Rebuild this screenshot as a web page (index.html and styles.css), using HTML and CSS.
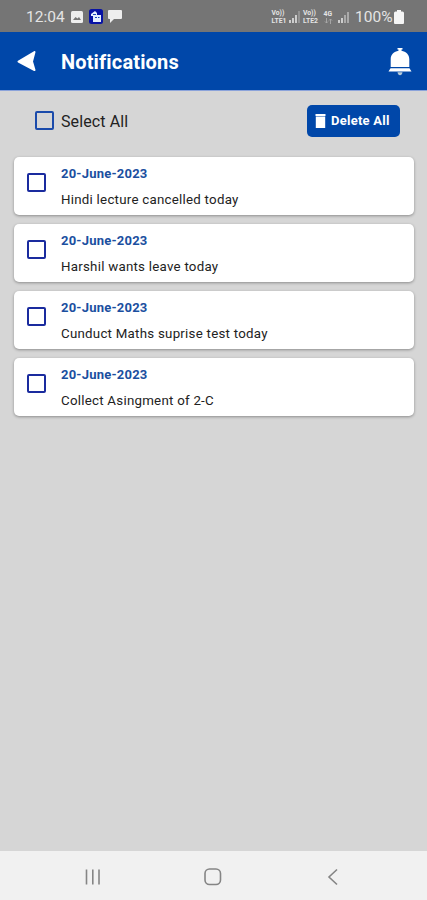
FILE: index.html
```html
<!DOCTYPE html>
<html lang="en">

<head>
  <meta charset="UTF-8">
  <meta name="viewport" content="width=device-width, initial-scale=1.0">
  <title>Notifications</title>
  <link rel="stylesheet" href="styles.css">
</head>

<body>
  <div class="status">
    <span class="time">12:04</span>
    <svg class="s-img" width="12" height="12" viewBox="0 0 12 12">
      <rect width="12" height="12" rx="1.5" fill="#eee" />
      <path d="M2 9l2.500-3 2 1.500 1.500-1.500L10 9z" fill="#777" />
    </svg>
    <svg class="s-app" width="14" height="15" viewBox="0 0 14 15">
      <rect width="14" height="15" rx="2.500" fill="#0712a5" />
      <path d="M2 5l4-3 2 2v2h4v7H4V7H2z" fill="#e6efff" />
      <path d="M4 5.500h3M6 8.500h2M9 8.500h1.500" stroke="#1746b8" />
    </svg>
    <svg class="s-chat" width="14" height="13" viewBox="0 0 14 13">
      <path d="M1 0h12q1 0 1 1v7q0 1-1 1H6l-4 4V9H1Q0 9 0 8V1q0-1 1-1z" fill="#eee" />
    </svg>
    <div class="right">
      <span class="lte">Vo))<br>LTE1</span>
      <svg class="signal" width="12" height="13" viewBox="0 0 12 13">
        <path d="M1 10v3M4 8v5M7 5v8" stroke="#ddd" stroke-width="1.700" />
        <path d="M10 1v12" stroke="#999" stroke-width="1.700" />
      </svg>
      <span class="lte">Vo))<br>LTE2</span>
      <div class="net">
        <span>4G</span>
        <svg width="9" height="6" viewBox="0 0 9 6">
          <path d="M2.500 0v5M1 3.500l1.500 1.500L4 3.500M6.500 6V1M5 2.500L6.500 1 8 2.500" fill="none" stroke="#aaa" stroke-width=".9" />
        </svg>
      </div>
      <svg class="signal last" width="12" height="13" viewBox="0 0 12 13">
        <path d="M1 10v3M4 8v5" stroke="#ddd" stroke-width="1.700" />
        <path d="M7 5v8M10 2v11" stroke="#aaa" stroke-width="2" />
      </svg>
      <span class="percent">100%</span>
      <svg width="10" height="14" viewBox="0 0 10 14">
        <path d="M3 0h4v1.500h1.500q1.500 0 1.500 1.500V13q0 1-1 1H1q-1 0-1-1V3q0-1.500 1.500-1.500H3z" fill="#f5f5f5" />
      </svg>
    </div>
  </div>

  <div class="header">
    <svg class="back" width="19" height="22" viewBox="0 0 19 22">
      <path d="M17.500 2L1.500 11.500l16 8.500-2.500-8.500z" fill="#fff" stroke="#fff" stroke-width="2" stroke-linejoin="round" />
    </svg>
    <h1>Notifications</h1>
    <svg class="bell" width="24" height="29" viewBox="0 0 24 29">
      <path d="M9.500 1h5v1.500h-1v1.300c4.500.7 7.800 4 7.800 8.500V20H2.700v-7.700c0-4.500 3.300-7.800 7.800-8.500V2.500h-1z" fill="#fff" />
      <path d="M2.500 21.200h19l2 3.300H.5z" fill="#fff" />
      <path d="M9.500 25.300h5q-.5 3-2.500 3t-2.500-3z" fill="#b7cbd9" />
    </svg>
  </div>

  <div class="content">
    <div class="tools">
      <span class="check"></span>
      <span class="select">Select All</span>
      <div class="delete">
        <svg width="11" height="14" viewBox="0 0 11 14">
          <path d="M.5 0h10v2H.5zM.8 2.600h9.400V14H.8z" fill="#fff" />
        </svg>
        <span>Delete All</span>
      </div>
    </div>

    <ul class="list">
      <li>
        <span class="check"></span>
        <div>
          <h2>20-June-2023</h2>
          <p>Hindi lecture cancelled today</p>
        </div>
      </li>
      <li>
        <span class="check"></span>
        <div>
          <h2>20-June-2023</h2>
          <p>Harshil wants leave today</p>
        </div>
      </li>
      <li>
        <span class="check"></span>
        <div>
          <h2>20-June-2023</h2>
          <p>Cunduct Maths suprise test today</p>
        </div>
      </li>
      <li>
        <span class="check"></span>
        <div>
          <h2>20-June-2023</h2>
          <p>Collect Asingment of 2-C</p>
        </div>
      </li>
    </ul>
  </div>

  <div class="nav">
    <svg width="20" height="20" viewBox="0 0 20 20">
      <path d="M3.500 2.500v15M9.800 2.500v15M16 2.500v15" />
    </svg>
    <svg width="20" height="20" viewBox="0 0 20 20">
      <rect x="2" y="2" width="15.500" height="15.500" rx="4.500" />
    </svg>
    <svg width="20" height="20" viewBox="0 0 20 20">
      <path d="M14 2.500L6 10l8 7.500" />
    </svg>
  </div>
</body>

</html>
```

FILE: styles.css
```css
* {
  margin: 0;
  padding: 0;
  box-sizing: border-box;
}

body {
  display: flex;
  flex-direction: column;
  height: 900px;
  font-family: Roboto, "Liberation Sans", sans-serif;
  background-color: #d6d6d6;
}

svg {
  display: block;
  flex: none;
}

/* status bar */
.status {
  display: flex;
  align-items: center;
  height: 32px;
  padding: 1px 23px 0 26px;
  color: #e4e4e4;
  background-color: #757575;
}

.time {
  width: 45px;
  font-size: 15.5px;
}

.s-app {
  margin: 0 5px 0 6px;
}

.right {
  display: flex;
  align-items: center;
  margin-left: auto;
}

.lte,
.net {
  width: 17.5px;
  font-size: 6.8px;
  font-weight: bold;
  line-height: 8px;
}

.net {
  padding-left: 3px;
}

.net span {
  display: block;
}

.signal {
  margin-right: 2px;
}

.last {
  margin-right: 5px;
}

.percent {
  width: 39px;
  font-size: 15.5px;
}

/* header */
.header {
  display: flex;
  align-items: center;
  height: 58px;
  padding: 0 15px 0 17px;
  color: #fff;
  background-color: #0047a9;
  box-shadow: 0 1px 0 #8ba3da;
}

.header h1 {
  margin: 2px 0 0 25px;
  font-size: 20px;
  line-height: 24px;
  letter-spacing: 0.15px;
}

.bell {
  margin-left: auto;
}

/* content */
.content {
  flex: 1;
}

.check {
  flex: none;
  width: 19px;
  height: 19px;
  border: 2px solid #1a2b9e;
  border-radius: 2px;
}

.tools {
  display: flex;
  align-items: center;
  height: 67px;
  padding: 0 27px 6px 35px;
}

.tools .check {
  border-color: #1b4bab;
}

.select {
  margin: 1px 0 0 7px;
  font-size: 16px;
  letter-spacing: 0.1px;
  color: #222;
}

.delete {
  display: flex;
  align-items: center;
  gap: 5px;
  width: 93px;
  height: 32px;
  margin-left: auto;
  padding-left: 8px;
  border-radius: 5px;
  font-size: 13px;
  font-weight: bold;
  letter-spacing: 0.25px;
  color: #fff;
  background-color: #0047a9;
}

.list {
  display: flex;
  flex-direction: column;
  gap: 9px;
  padding: 0 13px 0 14px;
  list-style: none;
}

.list li {
  display: flex;
  height: 58px;
  padding: 9px 13px 0;
  border-radius: 5px;
  background-color: #fff;
  box-shadow: 0 1px 3px rgba(0, 0, 0, .35);
}

.list .check {
  margin: 7px 15px 0 0;
}

.list h2 {
  font-size: 13px;
  line-height: 16px;
  letter-spacing: 0.22px;
  color: #1b4f9f;
}

.list p {
  margin-top: 10px;
  font-size: 13.3px;
  line-height: 16px;
  letter-spacing: 0.25px;
  color: #222;
}

/* bottom navigation */
.nav {
  display: flex;
  justify-content: space-between;
  align-items: center;
  height: 49px;
  padding: 2px 84px 0 83px;
  background-color: #f1f1f1;
}

.nav svg {
  fill: none;
  stroke: #858585;
  stroke-width: 1.6;
}
```
